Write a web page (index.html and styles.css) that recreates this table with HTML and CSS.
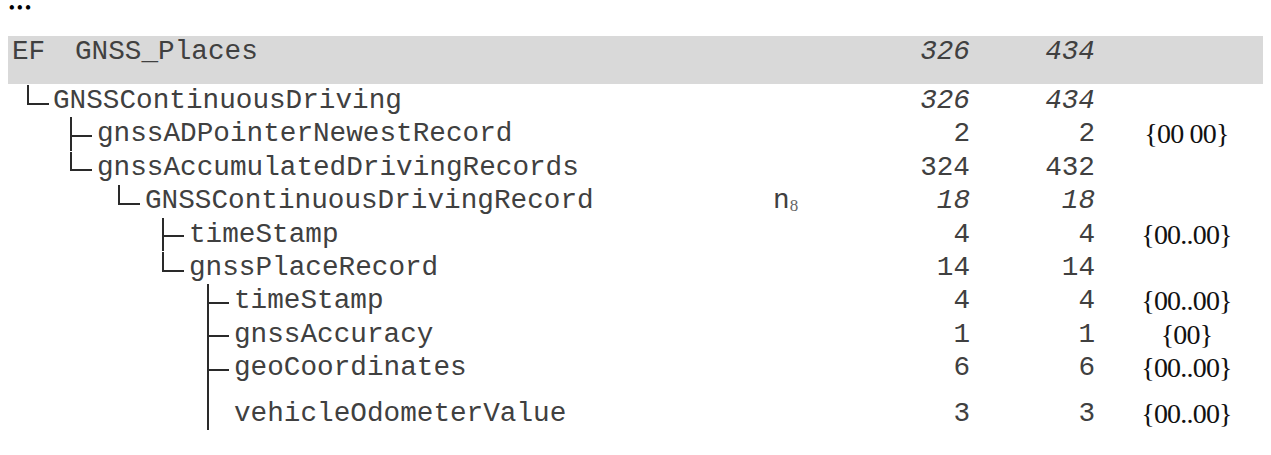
FILE: index.html
```html
<!DOCTYPE html>
<html>
<head>
<meta charset="utf-8">
<link rel="stylesheet" href="styles.css">
</head>
<body>
<div class="doc">
  <div class="ellipsis"><span>•••</span></div>
  <div class="table">
    <div class="row head">
      <span class="name"><span class="ef">EF</span>GNSS_Places</span>
      <span class="n"></span>
      <span class="num it">326</span>
      <span class="num it">434</span>
      <span class="def"></span>
    </div>
    <div class="row">
      <span class="name l1 elbow">GNSSContinuousDriving</span>
      <span class="n"></span>
      <span class="num it">326</span>
      <span class="num it">434</span>
      <span class="def"></span>
    </div>
    <div class="row">
      <span class="name l2 tee">gnssADPointerNewestRecord</span>
      <span class="n"></span>
      <span class="num">2</span>
      <span class="num">2</span>
      <span class="def">{00 00}</span>
    </div>
    <div class="row">
      <span class="name l2 elbow">gnssAccumulatedDrivingRecords</span>
      <span class="n"></span>
      <span class="num">324</span>
      <span class="num">432</span>
      <span class="def"></span>
    </div>
    <div class="row">
      <span class="name l3 elbow">GNSSContinuousDrivingRecord</span>
      <span class="n">n<sub>8</sub></span>
      <span class="num it">18</span>
      <span class="num it">18</span>
      <span class="def"></span>
    </div>
    <div class="row">
      <span class="name l4 tee">timeStamp</span>
      <span class="n"></span>
      <span class="num">4</span>
      <span class="num">4</span>
      <span class="def">{00..00}</span>
    </div>
    <div class="row">
      <span class="name l4 elbow">gnssPlaceRecord</span>
      <span class="n"></span>
      <span class="num">14</span>
      <span class="num">14</span>
      <span class="def"></span>
    </div>
    <div class="row">
      <span class="name l5 tee">timeStamp</span>
      <span class="n"></span>
      <span class="num">4</span>
      <span class="num">4</span>
      <span class="def">{00..00}</span>
    </div>
    <div class="row">
      <span class="name l5 tee">gnssAccuracy</span>
      <span class="n"></span>
      <span class="num">1</span>
      <span class="num">1</span>
      <span class="def">{00}</span>
    </div>
    <div class="row">
      <span class="name l5 tee">geoCoordinates</span>
      <span class="n"></span>
      <span class="num">6</span>
      <span class="num">6</span>
      <span class="def">{00..00}</span>
    </div>
    <div class="row last">
      <span class="name l5 pipe">vehicleOdometerValue</span>
      <span class="n"></span>
      <span class="num">3</span>
      <span class="num">3</span>
      <span class="def">{00..00}</span>
    </div>
  </div>
</div>
</body>
</html>
```
FILE: styles.css
```css
html, body {
  margin: 0;
  padding: 0;
  background: #ffffff;
}

.doc {
  width: 1271px;
  color: #404040;
  font-family: "Liberation Mono", "Courier New", monospace;
  font-size: 27.7px;
}

.ellipsis {
  height: 36px;
  padding-left: 9px;
  font-family: "Liberation Serif", "Times New Roman", serif;
  font-weight: bold;
  font-size: 16px;
  line-height: 16px;
  letter-spacing: 2.5px;
  color: #000;
}

.ellipsis span {
  display: inline-block;
}

.table {
  margin-left: 8px;
  width: 1255px;
}

.row {
  display: grid;
  grid-template-columns: 765px 107px 90px 125px 1fr;
  height: 33.4px;
  line-height: 33.4px;
  white-space: nowrap;
}

.row.head {
  background: #d9d9d9;
  height: 48px;
  padding-top: 2px;
  box-sizing: border-box;
  line-height: 28px;
}

.row.last {
  height: 45px;
  padding-top: 12px;
  box-sizing: border-box;
}

.head .name {
  padding-left: 4px;
}

.ef {
  display: inline-block;
  width: 63px;
}

.name {
  position: relative;
}

.l1 { padding-left: 45px; }
.l2 { padding-left: 89px; }
.l3 { padding-left: 137px; }
.l4 { padding-left: 181px; }
.l5 { padding-left: 226px; }

.l1 { --cx: 19px; }
.l2 { --cx: 62px; }
.l3 { --cx: 110px; }
.l4 { --cx: 154px; }
.l5 { --cx: 199px; }

.elbow::before {
  content: "";
  position: absolute;
  left: var(--cx);
  top: 1px;
  width: 20px;
  height: calc(50% + 1px);
  border-left: 2px solid #2a2a2a;
  border-bottom: 2px solid #2a2a2a;
}

.tee::before {
  content: "";
  position: absolute;
  left: var(--cx);
  top: 0;
  bottom: 0;
  border-left: 2px solid #2a2a2a;
}

.tee::after {
  content: "";
  position: absolute;
  left: var(--cx);
  top: calc(50% + 1px);
  width: 22px;
  border-top: 2px solid #2a2a2a;
}

.pipe::before {
  content: "";
  position: absolute;
  left: var(--cx);
  top: -12px;
  bottom: -3px;
  border-left: 2px solid #2a2a2a;
}

.n sub {
  font-family: "Liberation Serif", "Times New Roman", serif;
  font-size: 17px;
  color: #666;
  vertical-align: -3px;
  line-height: 0;
}

.num {
  text-align: right;
}

.it {
  font-style: italic;
}

.def {
  padding-left: 15px;
  text-align: center;
  font-family: "Liberation Serif", "Times New Roman", serif;
  font-size: 28px;
  letter-spacing: -0.8px;
  color: #111;
}
```
